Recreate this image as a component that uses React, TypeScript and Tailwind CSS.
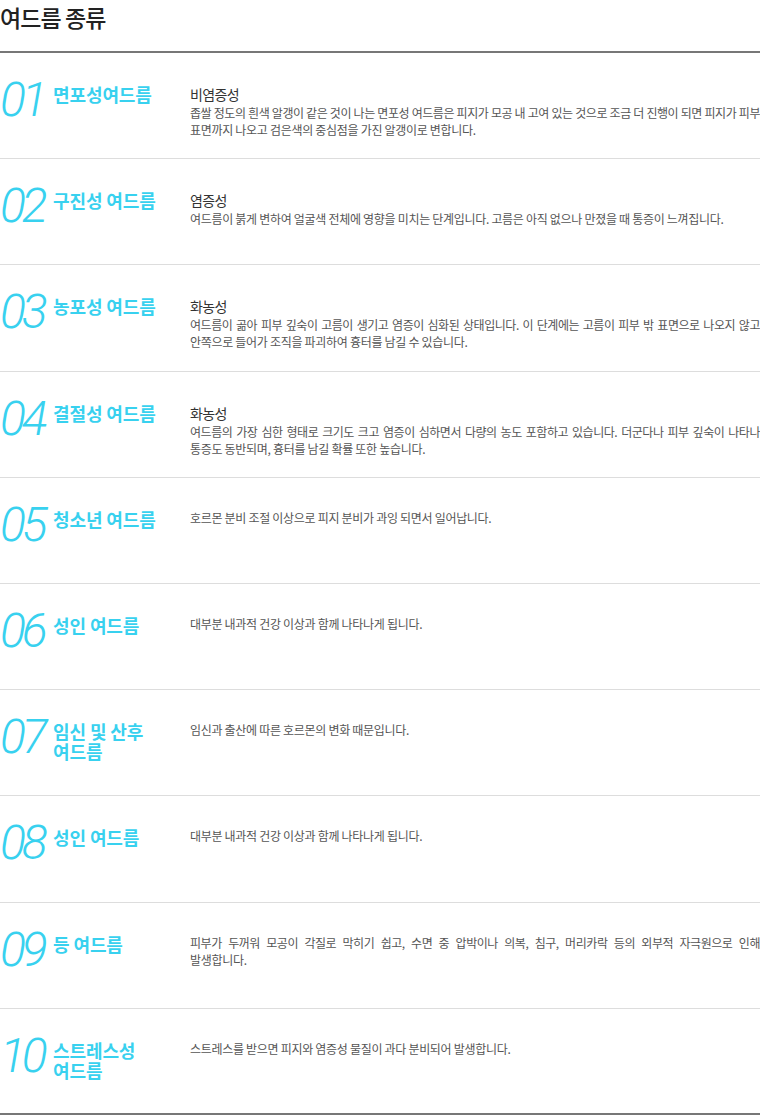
const rows = [
  {
    no: "01",
    title: ["면포성여드름"],
    sub: "비염증성",
    lines: [
      "좁쌀 정도의 흰색 알갱이 같은 것이 나는 면포성 여드름은 피지가 모공 내 고여 있는 것으로 조금 더 진행이 되면 피지가 피부",
      "표면까지 나오고 검은색의 중심점을 가진 알갱이로 변합니다.",
    ],
  },
  {
    no: "02",
    title: ["구진성 여드름"],
    sub: "염증성",
    lines: ["여드름이 붉게 변하여 얼굴색 전체에 영향을 미치는 단계입니다. 고름은 아직 없으나 만졌을 때 통증이 느껴집니다."],
  },
  {
    no: "03",
    title: ["농포성 여드름"],
    sub: "화농성",
    lines: [
      "여드름이 곪아 피부 깊숙이 고름이 생기고 염증이 심화된 상태입니다. 이 단계에는 고름이 피부 밖 표면으로 나오지 않고",
      "안쪽으로 들어가 조직을 파괴하여 흉터를 남길 수 있습니다.",
    ],
  },
  {
    no: "04",
    title: ["결절성 여드름"],
    sub: "화농성",
    lines: [
      "여드름의 가장 심한 형태로 크기도 크고 염증이 심하면서 다량의 농도 포함하고 있습니다. 더군다나 피부 깊숙이 나타나",
      "통증도 동반되며, 흉터를 남길 확률 또한 높습니다.",
    ],
  },
  {
    no: "05",
    title: ["청소년 여드름"],
    lines: ["호르몬 분비 조절 이상으로 피지 분비가 과잉 되면서 일어납니다."],
  },
  {
    no: "06",
    title: ["성인 여드름"],
    lines: ["대부분 내과적 건강 이상과 함께 나타나게 됩니다."],
  },
  {
    no: "07",
    title: ["임신 및 산후", "여드름"],
    lines: ["임신과 출산에 따른 호르몬의 변화 때문입니다."],
  },
  {
    no: "08",
    title: ["성인 여드름"],
    lines: ["대부분 내과적 건강 이상과 함께 나타나게 됩니다."],
  },
  {
    no: "09",
    title: ["등 여드름"],
    lines: [
      "피부가 두꺼워 모공이 각질로 막히기 쉽고, 수면 중 압박이나 의복, 침구, 머리카락 등의 외부적 자극원으로 인해",
      "발생합니다.",
    ],
  },
  {
    no: "10",
    title: ["스트레스성", "여드름"],
    lines: ["스트레스를 받으면 피지와 염증성 물질이 과다 분비되어 발생합니다."],
  },
];

const kr = "font-['Noto_Sans_CJK_KR','Noto_Sans',sans-serif]";

export default function App() {
  return (
    <div className={`w-[760px] overflow-hidden bg-white ${kr}`}>
      {/* 제목 */}
      <div className="h-[53px] border-b-2 border-[#777] pt-[2px]">
        <h1 className="text-[23px] leading-[30px] font-medium tracking-[-0.9px] text-[#222]">여드름 종류</h1>
      </div>

      {rows.map((row, i) => (
        <div
          key={row.no}
          className={`flex h-[106.2px] ${
            i === rows.length - 1 ? "border-b-2 border-[#777]" : "border-b border-[#ddd]"
          }`}
        >
          <div className="w-[53px] shrink-0 pt-[23px]">
            <span className="font-['Roboto',sans-serif] font-light italic text-[48px] leading-none tracking-[-4px] text-[#38d1ef]">
              {row.no}
            </span>
          </div>
          <div className="w-[137px] shrink-0 pt-[31px] text-[18px] leading-[20px] font-bold tracking-[-0.1px] text-[#38d1ef]">
            {row.title.map((t) => (
              <div key={t}>{t}</div>
            ))}
          </div>
          <div className="flex-1 min-w-0 pt-[31px]">
            {row.sub && (
              <div className="text-[14px] leading-[20px] tracking-[-0.6px] text-[#333]">{row.sub}</div>
            )}
            <div className="text-[12px] leading-[17px] tracking-[-0.3px] text-[#555]">
              {row.lines.map((l, j) => (
                <div
                  key={j}
                  className={
                    j < row.lines.length - 1
                      ? "text-justify [text-align-last:justify] tracking-[-0.45px]"
                      : ""
                  }
                >
                  {l}
                </div>
              ))}
            </div>
          </div>
        </div>
      ))}
    </div>
  );
}
